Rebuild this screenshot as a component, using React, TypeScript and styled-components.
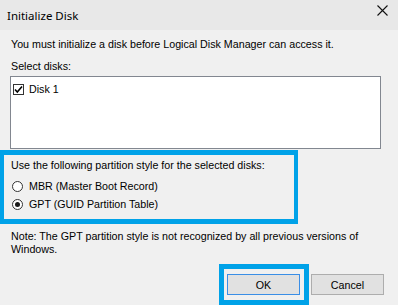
import React, { useState } from 'react';
import styled, { createGlobalStyle } from 'styled-components';

const GlobalStyle = createGlobalStyle`
  html, body {
    margin: 0;
    padding: 0;
    background: #f0f0f0;
  }
  body {
    font-family: "Liberation Sans", Arial, sans-serif;
    font-size: 10.7px;
    color: #000;
  }
`;

const Dialog = styled.div`
  width: 398px;
  height: 305px;
  display: flex;
  flex-direction: column;
  background: #f0f0f0;
  overflow: hidden;
`;

const TitleBar = styled.div`
  height: 30px;
  flex: none;
  display: flex;
  align-items: center;
  justify-content: space-between;
  padding: 0 10px 0 7px;
  background: #e8e8e8;
`;

const Title = styled.span`
  font-family: "Noto Sans", "Open Sans", sans-serif;
  font-size: 11.5px;
  color: #000;
  margin-top: 1px;
`;

const CloseButton = styled.button`
  width: 12px;
  height: 12px;
  padding: 0;
  margin-top: -9px;
  border: none;
  background: none;
  display: flex;
  align-items: center;
  justify-content: center;
`;

const Body = styled.div`
  display: flex;
  flex-direction: column;
  padding: 0 17px 0 10px;
`;

const Line = styled.div<{ $top: number }>`
  line-height: 13px;
  margin-top: ${p => p.$top}px;
  padding-left: 1px;
`;

const ListBox = styled.div`
  box-sizing: border-box;
  height: 73px;
  margin-top: 3px;
  background: #fff;
  border: 1px solid #828790;
  padding: 4px 0 0 2px;
`;

const ListItem = styled.label`
  display: flex;
  align-items: center;
  gap: 5px;
  height: 16px;
  line-height: 13px;
  cursor: default;
`;

const CheckBox = styled.span`
  box-sizing: border-box;
  width: 11px;
  height: 11px;
  border: 1px solid #333;
  background: #fff;
  display: flex;
  align-items: center;
  justify-content: center;
`;

const Highlight = styled.div<{ $edge: number }>`
  border: 5px solid #00a2e8;
  border-left-width: ${p => p.$edge}px;
  border-right-width: ${p => p.$edge}px;
`;

const GroupHighlight = styled(Highlight)`
  box-sizing: border-box;
  width: 298px;
  height: 74px;
  margin: 1px 0 0 -10px;
  padding: 4px 0 0 7px;
`;

const RadioRow = styled.label`
  display: flex;
  align-items: center;
  gap: 6px;
  height: 18px;
  padding-left: 1px;
  line-height: 13px;
`;

const RadioCircle = styled.span<{ $on: boolean }>`
  box-sizing: border-box;
  width: 11px;
  height: 11px;
  border-radius: 50%;
  border: 1px solid #333;
  background: #fff;
  display: flex;
  align-items: center;
  justify-content: center;
  &::after {
    content: '';
    width: 5px;
    height: 5px;
    border-radius: 50%;
    background: #1a1a1a;
    display: ${p => (p.$on ? 'block' : 'none')};
  }
`;

const GroupTitle = styled.div`
  line-height: 13px;
  margin-bottom: 5px;
`;

const Note = styled.div`
  line-height: 13px;
  margin-top: 6px;
  padding-left: 1px;
  width: 360px;
`;

const ButtonRow = styled.div`
  display: flex;
  justify-content: flex-end;
  align-items: center;
  gap: 2px;
  margin-top: 8px;
  margin-right: -3px;
`;

const OkHighlight = styled(Highlight)`
  padding: 5px 4px 5px 3px;
`;

const Button = styled.button<{ $default?: boolean }>`
  box-sizing: border-box;
  width: 73px;
  height: 21px;
  padding: 0;
  font-family: "Liberation Sans", Arial, sans-serif;
  font-size: 10.7px;
  color: #000;
  background: #e1e1e1;
  border: 1px solid ${p => (p.$default ? '#3a8ee6' : '#adadad')};
`;

export default function App() {
  const [style, setStyle] = useState<'mbr' | 'gpt'>('gpt');

  return (
    <Dialog>
      <GlobalStyle />
      <TitleBar>
        <Title>Initialize Disk</Title>
        <CloseButton aria-label="Close">
          <svg width="11" height="11" viewBox="0 0 11 11">
            <path d="M0.5 0.5 L10.5 10.5 M10.5 0.5 L0.5 10.5" stroke="#111" strokeWidth="1.1" />
          </svg>
        </CloseButton>
      </TitleBar>
      <Body>
        <Line $top={8}>You must initialize a disk before Logical Disk Manager can access it.</Line>
        <Line $top={9}>Select disks:</Line>
        <ListBox>
          <ListItem>
            <CheckBox>
              <svg width="9" height="9" viewBox="0 0 9 9">
                <path d="M1 4.5 L3.3 7 L8 1.5" stroke="#000" strokeWidth="1.6" fill="none" />
              </svg>
            </CheckBox>
            Disk 1
          </ListItem>
        </ListBox>
        <GroupHighlight $edge={4}>
          <GroupTitle>Use the following partition style for the selected disks:</GroupTitle>
          <RadioRow onClick={() => setStyle('mbr')}>
            <RadioCircle $on={style === 'mbr'} />
            MBR (Master Boot Record)
          </RadioRow>
          <RadioRow onClick={() => setStyle('gpt')}>
            <RadioCircle $on={style === 'gpt'} />
            GPT (GUID Partition Table)
          </RadioRow>
        </GroupHighlight>
        <Note>Note: The GPT partition style is not recognized by all previous versions of Windows.</Note>
        <ButtonRow>
          <OkHighlight $edge={5}>
            <Button $default>OK</Button>
          </OkHighlight>
          <Button>Cancel</Button>
        </ButtonRow>
      </Body>
    </Dialog>
  );
}
